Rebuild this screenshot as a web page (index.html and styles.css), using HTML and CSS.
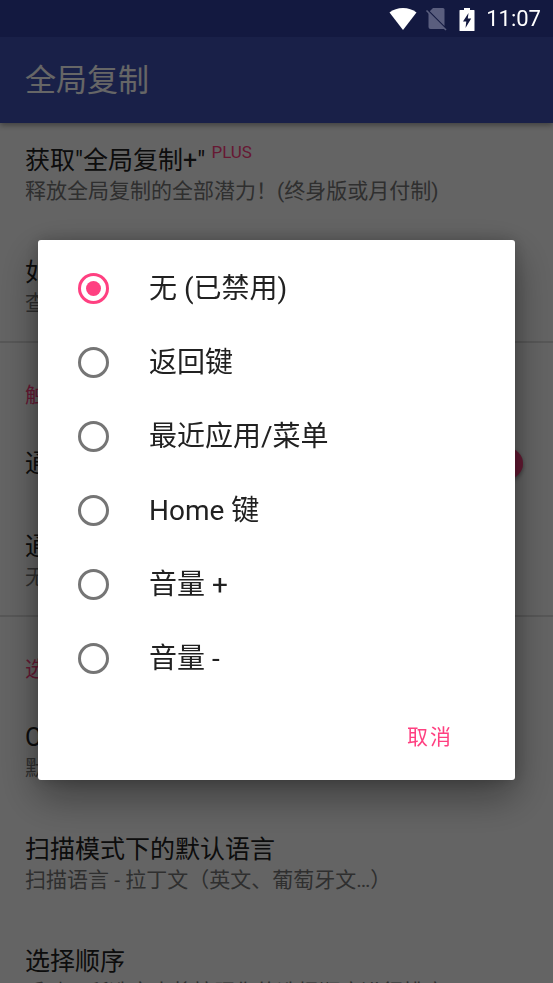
FILE: index.html
```html
<!DOCTYPE html>
<html lang="zh-CN">

<head>
    <meta charset="UTF-8">
    <meta name="viewport" content="width=device-width, initial-scale=1.0">
    <title>全局复制</title>
    <link rel="stylesheet" href="styles.css">
</head>

<body>
    <div class="status-bar">
        <svg class="status-icon" viewBox="0 0 28 28" aria-hidden="true">
            <path fill="#fff" d="M14 26 L.5 8.5 C4 5.500 9 4 14 4 S24 5.500 27.500 8.500 Z" />
        </svg>
        <svg class="status-icon sim-icon" viewBox="0 0 28 28" aria-hidden="true">
            <path fill="#5a5e7e" d="M12 4 H22 q1.500 0 1.500 1.500 V22 L8.800 7.300 Z" />
            <path fill="#5a5e7e" d="M7.500 8.500 L23.500 24.500 Q23 25 22 25 H9.500 Q7.500 25 7.500 23 Z" />
            <path stroke="#5a5e7e" stroke-width="1.6" d="M5.500 6.500 L25 26" />
        </svg>
        <svg class="status-icon battery-icon" viewBox="0 0 16 28" aria-hidden="true">
            <path fill="#fff" d="M5 4 h6 v2 h4 q.5 0 .5 .5 V26.500 q0 .5 -.5 .5 H1 q-.5 0 -.5 -.5 V6.500 Q.5 6 1 6 h4 Z" />
            <path fill="#131940" d="M9.500 9 L4 17.500 H7.300 L6.500 24 L12.200 14.500 H8.800 Z" />
        </svg>
        <span class="status-time">11:07</span>
    </div>

    <header class="app-bar">
        <h1 class="app-title">全局复制</h1>
    </header>

    <main class="settings">
        <section class="group">
            <div class="item">
                <h3 class="item-title">获取"全局复制+" <sup class="plus">PLUS</sup></h3>
                <p class="item-summary">释放全局复制的全部潜力！(终身版或月付制)</p>
            </div>
            <div class="item">
                <h3 class="item-title">如何使用</h3>
                <p class="item-summary">查看使用教程</p>
            </div>
        </section>

        <section class="group">
            <h2 class="group-title">触发方式</h2>
            <div class="item item-switch">
                <label class="item-title" for="notify">通知栏开关</label>
                <input class="switch" type="checkbox" id="notify" checked>
            </div>
            <div class="item">
                <h3 class="item-title">通过按键触发</h3>
                <p class="item-summary">无 (已禁用)</p>
            </div>
        </section>

        <section class="group">
            <h2 class="group-title">选项</h2>
            <div class="item">
                <h3 class="item-title">OCR 设置</h3>
                <p class="item-summary">默认识别语言</p>
            </div>
            <div class="item">
                <h3 class="item-title">扫描模式下的默认语言</h3>
                <p class="item-summary">扫描语言 - 拉丁文（英文、葡萄牙文…）</p>
            </div>
            <div class="item">
                <h3 class="item-title">选择顺序</h3>
                <p class="item-summary">手动：所选文本将按照你的选择顺序进行排序</p>
            </div>
        </section>
    </main>

    <div class="overlay">
        <form class="dialog" role="dialog" aria-label="按键">
            <label class="option"><input class="radio" type="radio" name="key" checked>无 (已禁用)</label>
            <label class="option"><input class="radio" type="radio" name="key">返回键</label>
            <label class="option"><input class="radio" type="radio" name="key">最近应用/菜单</label>
            <label class="option"><input class="radio" type="radio" name="key">Home 键</label>
            <label class="option"><input class="radio" type="radio" name="key">音量 +</label>
            <label class="option"><input class="radio" type="radio" name="key">音量 -</label>
            <div class="actions">
                <button class="cancel" type="button">取消</button>
            </div>
        </form>
    </div>
</body>

</html>
```
FILE: styles.css
```css
* {
    box-sizing: border-box;
}

body {
    margin: 0;
    height: 100vh;
    overflow: hidden;
    background: #fafafa;
    color: #212121;
    font-family: Roboto, "Noto Sans CJK SC", sans-serif;
}

h1,
h2,
h3,
p {
    margin: 0;
    font-weight: 400;
}

/* 状态栏不受遮罩影响 */
.status-bar {
    position: relative;
    z-index: 3;
    display: flex;
    align-items: center;
    justify-content: flex-end;
    height: 37px;
    padding-right: 12px;
    background: #131940;
    color: #fff;
}

.status-icon {
    width: 28px;
    height: 28px;
    margin-bottom: 2px;
}

.sim-icon {
    margin-left: 4px;
}

.battery-icon {
    width: 16px;
    margin-left: 10px;
}

.status-time {
    margin-left: 11px;
    font-size: 22px;
    line-height: 38px;
}

.app-bar {
    position: relative;
    z-index: 1;
    display: flex;
    align-items: center;
    height: 86px;
    padding: 2px 25px 0;
    background: #3f51b5;
    box-shadow: 0 2px 6px rgba(0, 0, 0, 0.4);
}

.app-title {
    color: #fff;
    font-size: 31px;
    line-height: 40px;
}

.group + .group {
    border-top: 2px solid #dadada;
}

.group-title {
    padding: 38px 25px 17px;
    color: #ff4081;
    font-size: 21px;
    line-height: 28px;
}

.item {
    padding: 21px 25px 29px;
}

.item:last-child {
    padding-bottom: 23px;
}

.item-title {
    font-size: 25px;
    line-height: 33px;
}

.item-summary {
    color: #757575;
    font-size: 21px;
    line-height: 29px;
    white-space: nowrap;
}

.plus {
    color: #ff4081;
    font-size: 17px;
    line-height: 0;
    vertical-align: 11px;
}

.item-switch {
    display: flex;
    align-items: center;
    justify-content: space-between;
    padding-right: 30px;
}

.switch {
    appearance: none;
    display: flex;
    align-items: center;
    justify-content: flex-end;
    width: 52px;
    height: 22px;
    margin: 0;
    border-radius: 11px;
    background: #ffb3cd;
}

.switch::before {
    content: "";
    flex: none;
    width: 31px;
    height: 31px;
    border-radius: 50%;
    background: #ff4081;
    box-shadow: 0 2px 4px rgba(0, 0, 0, 0.4);
}

.overlay {
    position: fixed;
    inset: 0;
    z-index: 2;
    display: flex;
    align-items: center;
    padding: 36px 38px 0;
    background: rgba(0, 0, 0, 0.6);
}

.dialog {
    flex: 1;
    padding: 12px 0 18px;
    border-radius: 3px;
    background: #fff;
    box-shadow: 0 16px 40px rgba(0, 0, 0, 0.4), 0 0 16px rgba(0, 0, 0, 0.2);
}

.option {
    display: flex;
    align-items: center;
    gap: 40px;
    height: 74px;
    padding: 0 40px 1px;
    font-size: 28px;
    line-height: 33px;
}

.radio {
    appearance: none;
    display: grid;
    place-items: center;
    width: 31px;
    height: 31px;
    margin: 0;
    border: 3px solid #757575;
    border-radius: 50%;
}

.radio:checked {
    border-color: #ff4081;
}

.radio:checked::before {
    content: "";
    width: 15px;
    height: 15px;
    border-radius: 50%;
    background: #ff4081;
}

.actions {
    display: flex;
    justify-content: flex-end;
    padding: 17px 50px 0 0;
}

.cancel {
    padding: 0 12px;
    border: 0;
    background: none;
    color: #ff4081;
    font-family: inherit;
    font-size: 21px;
    line-height: 49px;
    letter-spacing: 2px;
}
```
